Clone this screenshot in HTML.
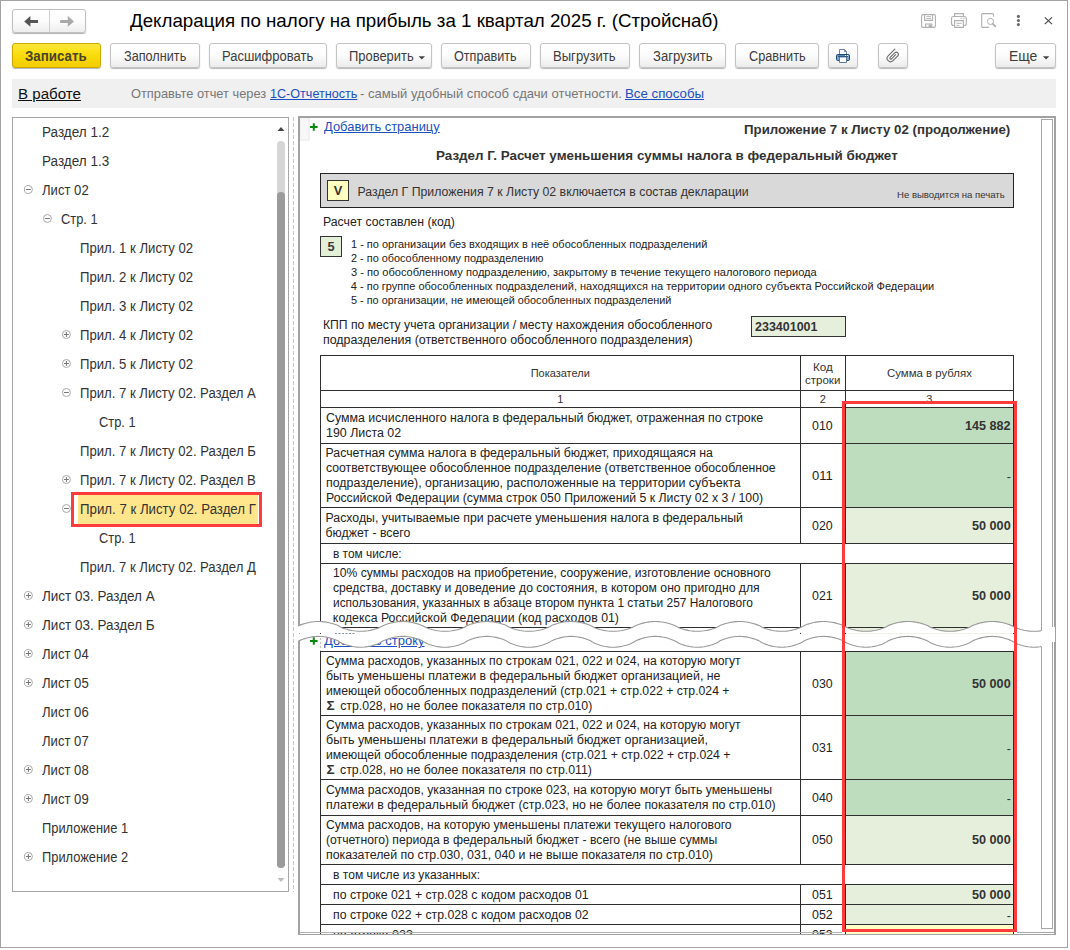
<!DOCTYPE html>
<html lang="ru"><head><meta charset="utf-8"><title>Декларация по налогу на прибыль</title>
<style>
html,body{margin:0;padding:0;background:#fff;}
body{width:1070px;height:950px;position:relative;overflow:hidden;font-family:"Liberation Sans", sans-serif;}
.abs{position:absolute;}
.t{position:absolute;white-space:nowrap;line-height:16px;transform-origin:0 50%;}
.btn{position:absolute;top:43px;height:25px;border:1px solid #c3c3c3;border-radius:3px;background:linear-gradient(#ffffff 0%,#fdfdfd 45%,#ececec 100%);box-shadow:0 1px 1px rgba(0,0,0,.28);box-sizing:border-box;}
.btn.y{border-color:#c9a800;background:linear-gradient(#ffe838 0%,#fadb0a 50%,#f2cc00 100%);}
</style></head><body>
<div class="abs" style="left:0;top:0;width:1066px;height:946px;border:1px solid #a3a3a3"></div>

<!-- nav buttons -->
<div class="abs" style="left:12px;top:9px;width:74px;height:24px;border:1px solid #c0c0c0;border-radius:3px;box-sizing:border-box;background:linear-gradient(#fff 0%,#fcfcfc 50%,#eee 100%);box-shadow:0 1px 1px rgba(0,0,0,.3)"></div>
<div class="abs" style="left:49px;top:10px;width:1px;height:22px;background:#cfcfcf"></div>
<svg class="abs" style="left:12px;top:9px" width="74" height="24" viewBox="12 9 74 24">
<path d="M24.2 21.4 L30.4 16 V19.9 H38 V22.9 H30.4 V26.8 Z" fill="#555"/>
<path d="M74 21.4 L67.8 16 V19.9 H60.2 V22.9 H67.8 V26.8 Z" fill="#a9a9a9"/>
</svg>

<!-- window icons -->
<svg class="abs" style="left:915px;top:8px" width="145" height="26" viewBox="915 8 145 26">
<g fill="none" stroke="#b0b0b0" stroke-width="1.1">
<rect x="921.6" y="14.6" width="13.800" height="12.800" rx="1.300"/>
<path d="M924.6 14.600 V20.400 H932.6 V14.600"/>
<path d="M926.300 16.600H931 M926.300 18.500H931" stroke-width="0.900"/>
<path d="M925.600 27.400 V24 H931.800 V27.400"/>
<rect x="928.600" y="24.500" width="3" height="3" fill="#b0b0b0" stroke="none"/>
<path d="M954.600 16.500 V13.600 H963.400 V16.500"/>
<rect x="951.500" y="16.500" width="14.800" height="9" rx="2"/>
<path d="M954.600 20.600 H963.400 V27.400 H954.600 Z" fill="#fff"/>
<path d="M956.500 23.300H961.800 M956.500 25.400H959.300" stroke-width="0.900"/>
<path d="M960.500 18.300H962.200 M963.200 18.300H964.800" stroke-width="0.900"/>
<path d="M993.500 16.800 V14.600 Q993.500 13.600 992.500 13.600 H982.700 Q981.700 13.600 981.700 14.600 V26.400 Q981.700 27.400 982.700 27.400 H989"/>
<circle cx="990.500" cy="21.400" r="3.100" stroke-width="1"/>
<path d="M992.800 23.800 L995.400 26.400" stroke-width="1.700" stroke-linecap="round"/>
</g>
<circle cx="1018.4" cy="16.4" r="1.55" fill="#6a6a6a"/><circle cx="1018.4" cy="20.5" r="1.55" fill="#6a6a6a"/><circle cx="1018.4" cy="24.6" r="1.55" fill="#6a6a6a"/>
<path d="M1044.8 17.300 L1052 24.200 M1052 17.300 L1044.8 24.200" stroke="#444" stroke-width="1.1" fill="none"/>
</svg>

<!-- toolbar buttons -->
<div class="btn y" style="left:12px;width:89px"></div>
<div class="btn" style="left:110px;width:90px"></div>
<div class="btn" style="left:209px;width:118px"></div>
<div class="btn" style="left:336px;width:96px"></div>
<div class="btn" style="left:441px;width:90px"></div>
<div class="btn" style="left:540px;width:90px"></div>
<div class="btn" style="left:639px;width:87px"></div>
<div class="btn" style="left:735px;width:84px"></div>
<div class="btn" style="left:828px;width:30px"></div>
<div class="btn" style="left:878px;width:30px"></div>
<div class="btn" style="left:995px;width:61px"></div>
<svg class="abs" style="left:410px;top:50px" width="20" height="12" viewBox="410 50 20 12"><path d="M418.600 56.300 H425 L421.800 59.600 Z" fill="#444"/></svg>
<svg class="abs" style="left:1038px;top:50px" width="16" height="12" viewBox="1038 50 16 12"><path d="M1042.900 56.300 H1049.300 L1046.100 59.600 Z" fill="#444"/></svg>
<!-- printer icon -->
<svg class="abs" style="left:834px;top:47px" width="18" height="18" viewBox="834 47 18 18">
<path d="M839.500 54.500 V49.500 H844.500 L846.500 51.500 V54.500 Z" fill="#fff" stroke="#70839b" stroke-width="1"/>
<path d="M844.500 49.500 V51.500 H846.500" fill="none" stroke="#70839b" stroke-width="1"/>
<rect x="836.500" y="54.500" width="13" height="6" rx="1.200" fill="#7ea6d6" stroke="#1f4a78" stroke-width="1"/>
<rect x="837.500" y="55" width="11" height="1" fill="#5b86b8"/>
<rect x="838" y="56" width="10" height="1" fill="#35557c"/>
<rect x="845" y="55" width="1" height="1" fill="#fff"/><rect x="847" y="55" width="1" height="1" fill="#fff"/>
<rect x="840" y="57" width="6" height="5.500" fill="#fff"/>
<rect x="840" y="57" width="6" height="1" fill="#a9c4e4"/>
<path d="M839.500 57 V62.500 H846.500 V57" fill="none" stroke="#5f7793" stroke-width="1"/>
</svg>
<!-- paperclip -->
<svg class="abs" style="left:884px;top:47px" width="18" height="18" viewBox="884 47 18 18">
<path d="M6.2 -3.4 L-3.300 -3.4 A3.4 3.4 0 0 0 -3.300 3.4 L3.500 3.4 A2.150 2.150 0 0 0 3.500 -0.900 L-3 -0.900 A1 1 0 0 0 -3 1.100 L2.800 1.100" fill="none" stroke="#6c6c6c" stroke-width="1.100" stroke-linecap="round" transform="translate(892.9 55.9) rotate(-45)"/>
</svg>

<!-- info bar -->
<div class="abs" style="left:12px;top:79px;width:1044px;height:29px;background:#f0f0f0"></div>

<!-- tree panel -->
<div class="abs" style="left:12px;top:117px;width:277px;height:775px;border:1px solid #a6a6a6;box-sizing:border-box;background:#fff"></div>
<div class="abs" style="left:71px;top:492px;width:191px;height:35px;border:3px solid #ff3b3b;box-sizing:border-box;background:#fff"></div>
<div class="abs" style="left:78px;top:495px;width:180px;height:29px;background:#ffe68c"></div>
<svg class="abs" style="left:12px;top:117px" width="277" height="775" viewBox="12 117 277 775">
<circle cx="28.4" cy="189.5" r="4" fill="#fff" stroke="#a8a8a8" stroke-width="1"/><path d="M25.9 189.5H30.9" stroke="#777" stroke-width="1"/><circle cx="47.4" cy="218.5" r="4" fill="#fff" stroke="#a8a8a8" stroke-width="1"/><path d="M44.9 218.5H49.9" stroke="#777" stroke-width="1"/><circle cx="66.4" cy="334.5" r="4" fill="#fff" stroke="#a8a8a8" stroke-width="1"/><path d="M63.900000000000006 334.5H68.9" stroke="#777" stroke-width="1"/><path d="M66.4 332.0V337.0" stroke="#777" stroke-width="1"/><circle cx="66.4" cy="363.5" r="4" fill="#fff" stroke="#a8a8a8" stroke-width="1"/><path d="M63.900000000000006 363.5H68.9" stroke="#777" stroke-width="1"/><path d="M66.4 361.0V366.0" stroke="#777" stroke-width="1"/><circle cx="66.4" cy="392.5" r="4" fill="#fff" stroke="#a8a8a8" stroke-width="1"/><path d="M63.900000000000006 392.5H68.9" stroke="#777" stroke-width="1"/><circle cx="66.4" cy="479.5" r="4" fill="#fff" stroke="#a8a8a8" stroke-width="1"/><path d="M63.900000000000006 479.5H68.9" stroke="#777" stroke-width="1"/><path d="M66.4 477.0V482.0" stroke="#777" stroke-width="1"/><circle cx="66.4" cy="508.5" r="4" fill="#fff" stroke="#a8a8a8" stroke-width="1"/><path d="M63.900000000000006 508.5H68.9" stroke="#777" stroke-width="1"/><circle cx="28.4" cy="595.5" r="4" fill="#fff" stroke="#a8a8a8" stroke-width="1"/><path d="M25.9 595.5H30.9" stroke="#777" stroke-width="1"/><path d="M28.4 593.0V598.0" stroke="#777" stroke-width="1"/><circle cx="28.4" cy="624.5" r="4" fill="#fff" stroke="#a8a8a8" stroke-width="1"/><path d="M25.9 624.5H30.9" stroke="#777" stroke-width="1"/><path d="M28.4 622.0V627.0" stroke="#777" stroke-width="1"/><circle cx="28.4" cy="653.5" r="4" fill="#fff" stroke="#a8a8a8" stroke-width="1"/><path d="M25.9 653.5H30.9" stroke="#777" stroke-width="1"/><path d="M28.4 651.0V656.0" stroke="#777" stroke-width="1"/><circle cx="28.4" cy="682.5" r="4" fill="#fff" stroke="#a8a8a8" stroke-width="1"/><path d="M25.9 682.5H30.9" stroke="#777" stroke-width="1"/><path d="M28.4 680.0V685.0" stroke="#777" stroke-width="1"/><circle cx="28.4" cy="769.5" r="4" fill="#fff" stroke="#a8a8a8" stroke-width="1"/><path d="M25.9 769.5H30.9" stroke="#777" stroke-width="1"/><path d="M28.4 767.0V772.0" stroke="#777" stroke-width="1"/><circle cx="28.4" cy="798.5" r="4" fill="#fff" stroke="#a8a8a8" stroke-width="1"/><path d="M25.9 798.5H30.9" stroke="#777" stroke-width="1"/><path d="M28.4 796.0V801.0" stroke="#777" stroke-width="1"/><circle cx="28.4" cy="856.5" r="4" fill="#fff" stroke="#a8a8a8" stroke-width="1"/><path d="M25.9 856.5H30.9" stroke="#777" stroke-width="1"/><path d="M28.4 854.0V859.0" stroke="#777" stroke-width="1"/>
<path d="M277.500 131 L281 127 L284.500 131 Z" fill="#444"/>
<rect x="277" y="141" width="8" height="727" rx="4" fill="#d6d6d6"/>
<rect x="277" y="192" width="8" height="676" rx="4" fill="#9b9b9b"/>
<path d="M277.500 878 L281 882 L284.500 878 Z" fill="#bdbdbd"/>
</svg>
<!-- splitter -->
<div class="abs" style="left:293px;top:117px;width:1px;height:775px;background:repeating-linear-gradient(#c9c9c9 0,#c9c9c9 4px,#fff 4px,#fff 6px)"></div>

<!-- report panel -->
<div class="abs" style="left:298px;top:116px;width:758px;height:819px;border:2px solid #a2a2a2;border-bottom-width:1px;box-sizing:border-box;background:#fff"></div>
<div class="abs" style="left:300px;top:118px;width:10px;height:23px;background:#f1f1f1"></div>
<div class="abs" style="left:301px;top:119px;width:7px;height:20px;background:#f8f8f8"></div>
<div class="abs" style="left:1041px;top:119px;width:12px;height:810px;border:1px solid #a6a6a6;box-sizing:border-box;background:#fff"></div>
<div class="abs" style="left:1017px;top:932px;width:37px;height:1px;background:#a6a6a6"></div>
<div class="abs" id="bl932" style="left:300px;top:932px;width:542px;height:1px;background:#b2b2b2;z-index:5"></div>
<svg class="abs" style="left:309px;top:122px" width="10" height="10" viewBox="0 0 10 10"><path d="M1 5H8.600M4.800 1.200V8.800" stroke="#0a8a0a" stroke-width="2" fill="none"/></svg>
<svg class="abs" style="left:309px;top:636px" width="10" height="10" viewBox="0 0 10 10"><path d="M1 5H8.600M4.800 1.200V8.800" stroke="#0a8a0a" stroke-width="2" fill="none"/></svg>

<!-- gray banner -->
<div class="abs" style="left:320px;top:173px;width:694px;height:35px;border:1px solid #222;box-sizing:border-box;background:#d9d9d9"></div>
<div class="abs" style="left:327px;top:180px;width:22px;height:21px;border:1px solid #333;box-sizing:border-box;background:#ffffc0"></div>
<div class="abs" style="left:320px;top:236px;width:22px;height:21px;border:1px solid #333;box-sizing:border-box;background:#e4efd8"></div>
<div class="abs" style="left:751px;top:316px;width:95px;height:21px;border:1px solid #333;box-sizing:border-box;background:#e6efdc"></div>

<div class="abs" style="left:320px;top:634px;width:1px;height:17px;background:repeating-linear-gradient(#c4c4c4 0,#c4c4c4 2px,#fff 2px,#fff 4px)"></div>
<div class="abs" style="left:846px;top:408px;width:167px;height:35px;background:#bedcbe"></div>
<div class="abs" style="left:846px;top:444px;width:167px;height:63px;background:#bedcbe"></div>
<div class="abs" style="left:846px;top:508px;width:167px;height:35px;background:#e6efdc"></div>
<div class="abs" style="left:846px;top:564px;width:167px;height:69px;background:#e6efdc"></div>
<div class="abs" style="left:846px;top:652px;width:167px;height:63px;background:#bedcbe"></div>
<div class="abs" style="left:846px;top:716px;width:167px;height:63px;background:#bedcbe"></div>
<div class="abs" style="left:846px;top:780px;width:167px;height:35px;background:#bedcbe"></div>
<div class="abs" style="left:846px;top:816px;width:167px;height:48px;background:#e6efdc"></div>
<div class="abs" style="left:846px;top:885px;width:167px;height:19px;background:#e6efdc"></div>
<div class="abs" style="left:846px;top:905px;width:167px;height:19px;background:#e6efdc"></div>
<div class="abs" style="left:846px;top:925px;width:167px;height:9px;background:#ffffc8"></div>
<div class="abs" style="left:320px;top:355px;width:694px;height:1px;background:#2e2e2e"></div>
<div class="abs" style="left:320px;top:390px;width:694px;height:1px;background:#2e2e2e"></div>
<div class="abs" style="left:320px;top:407px;width:694px;height:1px;background:#2e2e2e"></div>
<div class="abs" style="left:320px;top:443px;width:694px;height:1px;background:#2e2e2e"></div>
<div class="abs" style="left:320px;top:507px;width:694px;height:1px;background:#2e2e2e"></div>
<div class="abs" style="left:320px;top:543px;width:694px;height:1px;background:#2e2e2e"></div>
<div class="abs" style="left:320px;top:563px;width:694px;height:1px;background:#2e2e2e"></div>
<div class="abs" style="left:320px;top:627px;width:694px;height:1px;background:#2e2e2e"></div>
<div class="abs" style="left:320px;top:355px;width:1px;height:278px;background:#2e2e2e"></div>
<div class="abs" style="left:1013px;top:355px;width:1px;height:278px;background:#2e2e2e"></div>
<div class="abs" style="left:845px;top:355px;width:1px;height:189px;background:#2e2e2e"></div>
<div class="abs" style="left:845px;top:563px;width:1px;height:70px;background:#2e2e2e"></div>
<div class="abs" style="left:800px;top:355px;width:1px;height:189px;background:#2e2e2e"></div>
<div class="abs" style="left:800px;top:563px;width:1px;height:70px;background:#2e2e2e"></div>
<div class="abs" style="left:320px;top:651px;width:694px;height:1px;background:#2e2e2e"></div>
<div class="abs" style="left:320px;top:715px;width:694px;height:1px;background:#2e2e2e"></div>
<div class="abs" style="left:320px;top:779px;width:694px;height:1px;background:#2e2e2e"></div>
<div class="abs" style="left:320px;top:815px;width:694px;height:1px;background:#2e2e2e"></div>
<div class="abs" style="left:320px;top:864px;width:694px;height:1px;background:#2e2e2e"></div>
<div class="abs" style="left:320px;top:884px;width:694px;height:1px;background:#2e2e2e"></div>
<div class="abs" style="left:320px;top:904px;width:694px;height:1px;background:#2e2e2e"></div>
<div class="abs" style="left:320px;top:924px;width:694px;height:1px;background:#2e2e2e"></div>
<div class="abs" style="left:320px;top:651px;width:1px;height:283px;background:#2e2e2e"></div>
<div class="abs" style="left:1013px;top:651px;width:1px;height:283px;background:#2e2e2e"></div>
<div class="abs" style="left:845px;top:651px;width:1px;height:214px;background:#2e2e2e"></div>
<div class="abs" style="left:845px;top:884px;width:1px;height:50px;background:#2e2e2e"></div>
<div class="abs" style="left:800px;top:651px;width:1px;height:214px;background:#2e2e2e"></div>
<div class="abs" style="left:800px;top:884px;width:1px;height:50px;background:#2e2e2e"></div>

<div class="abs" id="texts" style="left:0;top:0;width:1070px;height:934px;overflow:hidden">
<span class="t" style="left:130.18px;top:13.00px;font-size:18.67px;color:#000;transform:scaleX(1.0041);">Декларация по налогу на прибыль за 1 квартал 2025 г. (Стройснаб)</span>
<span class="t" style="left:25.26px;top:48.00px;font-size:14px;color:#4a4326;font-weight:700;transform:scaleX(0.9514);">Записать</span>
<span class="t" style="left:123.56px;top:48.00px;font-size:14px;color:#3d3d3d;transform:scaleX(0.9061);">Заполнить</span>
<span class="t" style="left:222.36px;top:48.00px;font-size:14px;color:#3d3d3d;transform:scaleX(0.9277);">Расшифровать</span>
<span class="t" style="left:349.16px;top:48.00px;font-size:14px;color:#3d3d3d;transform:scaleX(0.9238);">Проверить</span>
<span class="t" style="left:454.26px;top:48.00px;font-size:14px;color:#3d3d3d;transform:scaleX(0.9029);">Отправить</span>
<span class="t" style="left:553.36px;top:48.00px;font-size:14px;color:#3d3d3d;transform:scaleX(0.9342);">Выгрузить</span>
<span class="t" style="left:652.66px;top:48.00px;font-size:14px;color:#3d3d3d;transform:scaleX(0.9334);">Загрузить</span>
<span class="t" style="left:748.66px;top:48.00px;font-size:14px;color:#3d3d3d;transform:scaleX(0.9085);">Сравнить</span>
<span class="t" style="left:1008.76px;top:48.00px;font-size:14px;color:#3d3d3d;transform:scaleX(0.9958);">Еще</span>
<span class="t" style="left:17.62px;top:86.00px;font-size:14.67px;color:#111;transform:scaleX(1.0308);text-decoration:underline;">В работе</span>
<span class="t" style="left:131.42px;top:86.00px;font-size:13px;color:#777;transform:scaleX(0.9861);">Отправьте отчет через</span>
<span class="t" style="left:270.02px;top:86.00px;font-size:13px;color:#1c4fc0;transform:scaleX(0.9686);text-decoration:underline;">1С-Отчетность</span>
<span class="t" style="left:360.22px;top:86.00px;font-size:13px;color:#777;transform:scaleX(1.0029);">- самый удобный способ сдачи отчетности.</span>
<span class="t" style="left:625.42px;top:86.00px;font-size:13px;color:#1c4fc0;transform:scaleX(1.0207);text-decoration:underline;">Все способы</span>
<span class="t" style="left:41.66px;top:124.00px;font-size:14.0px;color:#333;transform:scaleX(0.9649);">Раздел 1.2</span>
<span class="t" style="left:41.66px;top:153.00px;font-size:14.0px;color:#333;transform:scaleX(0.9649);">Раздел 1.3</span>
<span class="t" style="left:42.06px;top:182.00px;font-size:14.0px;color:#333;transform:scaleX(0.9356);">Лист 02</span>
<span class="t" style="left:60.66px;top:211.00px;font-size:14.0px;color:#333;transform:scaleX(0.9174);">Стр. 1</span>
<span class="t" style="left:79.66px;top:240.00px;font-size:14.0px;color:#333;transform:scaleX(0.9395);">Прил. 1 к Листу 02</span>
<span class="t" style="left:79.66px;top:269.00px;font-size:14.0px;color:#333;transform:scaleX(0.9395);">Прил. 2 к Листу 02</span>
<span class="t" style="left:79.66px;top:298.00px;font-size:14.0px;color:#333;transform:scaleX(0.9395);">Прил. 3 к Листу 02</span>
<span class="t" style="left:79.66px;top:327.00px;font-size:14.0px;color:#333;transform:scaleX(0.9395);">Прил. 4 к Листу 02</span>
<span class="t" style="left:79.66px;top:356.00px;font-size:14.0px;color:#333;transform:scaleX(0.9395);">Прил. 5 к Листу 02</span>
<span class="t" style="left:79.66px;top:385.00px;font-size:14.0px;color:#333;transform:scaleX(0.9373);">Прил. 7 к Листу 02. Раздел А</span>
<span class="t" style="left:98.66px;top:414.00px;font-size:14.0px;color:#333;transform:scaleX(0.9174);">Стр. 1</span>
<span class="t" style="left:79.66px;top:443.00px;font-size:14.0px;color:#333;transform:scaleX(0.9381);">Прил. 7 к Листу 02. Раздел Б</span>
<span class="t" style="left:79.66px;top:472.00px;font-size:14.0px;color:#333;transform:scaleX(0.9373);">Прил. 7 к Листу 02. Раздел В</span>
<span class="t" style="left:79.66px;top:501.00px;font-size:14.0px;color:#333;transform:scaleX(0.9462);">Прил. 7 к Листу 02. Раздел Г</span>
<span class="t" style="left:98.66px;top:530.00px;font-size:14.0px;color:#333;transform:scaleX(0.9174);">Стр. 1</span>
<span class="t" style="left:79.66px;top:559.00px;font-size:14.0px;color:#333;transform:scaleX(0.9366);">Прил. 7 к Листу 02. Раздел Д</span>
<span class="t" style="left:42.06px;top:588.00px;font-size:14.0px;color:#333;transform:scaleX(0.9617);">Лист 03. Раздел А</span>
<span class="t" style="left:42.06px;top:617.00px;font-size:14.0px;color:#333;transform:scaleX(0.9629);">Лист 03. Раздел Б</span>
<span class="t" style="left:42.06px;top:646.00px;font-size:14.0px;color:#333;transform:scaleX(0.9356);">Лист 04</span>
<span class="t" style="left:42.06px;top:675.00px;font-size:14.0px;color:#333;transform:scaleX(0.9356);">Лист 05</span>
<span class="t" style="left:42.06px;top:704.00px;font-size:14.0px;color:#333;transform:scaleX(0.9356);">Лист 06</span>
<span class="t" style="left:42.06px;top:733.00px;font-size:14.0px;color:#333;transform:scaleX(0.9356);">Лист 07</span>
<span class="t" style="left:42.06px;top:762.00px;font-size:14.0px;color:#333;transform:scaleX(0.9356);">Лист 08</span>
<span class="t" style="left:42.06px;top:791.00px;font-size:14.0px;color:#333;transform:scaleX(0.9356);">Лист 09</span>
<span class="t" style="left:41.66px;top:820.00px;font-size:14.0px;color:#333;transform:scaleX(0.9177);">Приложение 1</span>
<span class="t" style="left:41.66px;top:849.00px;font-size:14.0px;color:#333;transform:scaleX(0.9177);">Приложение 2</span>
<span class="t" style="left:323.73px;top:119.00px;font-size:12.8px;color:#1c4fc0;transform:scaleX(1.0102);text-decoration:underline;">Добавить страницу</span>
<span class="t" style="left:743.90px;top:122.00px;font-size:13.33px;color:#333;font-weight:700;transform:scaleX(0.9960);">Приложение 7 к Листу 02 (продолжение)</span>
<span class="t" style="left:435.70px;top:148.00px;font-size:13.33px;color:#333;font-weight:700;transform:scaleX(1.0063);">Раздел Г. Расчет уменьшения суммы налога в федеральный бюджет</span>
<span class="t" style="left:333.83px;top:183.00px;font-size:12.8px;color:#333;font-weight:700;">V</span>
<span class="t" style="left:357.56px;top:184.00px;font-size:12.3px;color:#333;">Раздел Г Приложения 7 к Листу 02 включается в состав декларации</span>
<span class="t" style="left:896.62px;top:187.00px;font-size:9.6px;color:#333;transform:scaleX(0.9971);">Не выводится на печать</span>
<span class="t" style="left:322.76px;top:214.00px;font-size:12.3px;color:#222;transform:scaleX(0.9978);">Расчет составлен (код)</span>
<span class="t" style="left:327.44px;top:239.00px;font-size:12.8px;color:#3a3a3a;font-weight:700;">5</span>
<span class="t" style="left:350.84px;top:236.00px;font-size:11px;color:#222;transform:scaleX(0.9973);">1 - по организации без входящих в неё обособленных подразделений</span>
<span class="t" style="left:350.84px;top:250.00px;font-size:11px;color:#222;transform:scaleX(0.9898);">2 - по обособленному подразделению</span>
<span class="t" style="left:350.84px;top:264.00px;font-size:11px;color:#222;transform:scaleX(1.0071);">3 - по обособленному подразделению, закрытому в течение текущего налогового периода</span>
<span class="t" style="left:350.84px;top:278.00px;font-size:11px;color:#222;">4 - по группе обособленных подразделений, находящихся на территории одного субъекта Российской Федерации</span>
<span class="t" style="left:350.84px;top:292.00px;font-size:11px;color:#222;transform:scaleX(0.9881);">5 - по организации, не имеющей обособленных подразделений</span>
<span class="t" style="left:322.76px;top:317.00px;font-size:12.3px;color:#222;transform:scaleX(0.9893);">КПП по месту учета организации / месту нахождения обособленного</span>
<span class="t" style="left:322.76px;top:332.00px;font-size:12.3px;color:#222;transform:scaleX(1.0106);">подразделения (ответственного обособленного подразделения)</span>
<span class="t" style="left:755.46px;top:319.00px;font-size:12.3px;color:#333;font-weight:700;transform:scaleX(1.0148);">233401001</span>
<span class="t" style="left:530.64px;top:365.00px;font-size:11px;color:#333;">Показатели</span>
<span class="t" style="left:812.79px;top:359.00px;font-size:11px;color:#333;transform:scaleX(1.0597);">Код</span>
<span class="t" style="left:805.04px;top:372.00px;font-size:11px;color:#333;transform:scaleX(1.0470);">строки</span>
<span class="t" style="left:886.84px;top:365.00px;font-size:11px;color:#333;transform:scaleX(1.0378);">Сумма в рублях</span>
<span class="t" style="left:557.24px;top:391.00px;font-size:11px;color:#333;">1</span>
<span class="t" style="left:819.64px;top:391.00px;font-size:11px;color:#333;">2</span>
<span class="t" style="left:926.24px;top:391.00px;font-size:11px;color:#333;">3</span>
<span class="t" style="left:325.56px;top:410.00px;font-size:12.3px;color:#222;transform:scaleX(1.0061);">Сумма исчисленного налога в федеральный бюджет, отраженная по строке</span>
<span class="t" style="left:325.56px;top:425.00px;font-size:12.3px;color:#222;transform:scaleX(1.0084);">190 Листа 02</span>
<span class="t" style="left:325.56px;top:445.00px;font-size:12.3px;color:#222;">Расчетная сумма налога в федеральный бюджет, приходящаяся на</span>
<span class="t" style="left:325.56px;top:460.00px;font-size:12.3px;color:#222;transform:scaleX(0.9950);">соответствующее обособленное подразделение (ответственное обособленное</span>
<span class="t" style="left:325.56px;top:475.00px;font-size:12.3px;color:#222;transform:scaleX(1.0072);">подразделение), организацию, расположенные на территории субъекта</span>
<span class="t" style="left:325.56px;top:490.00px;font-size:12.3px;color:#222;transform:scaleX(0.9975);">Российской Федерации (сумма строк 050 Приложений 5 к Листу 02 х 3 / 100)</span>
<span class="t" style="left:325.56px;top:510.00px;font-size:12.3px;color:#222;">Расходы, учитываемые при расчете уменьшения налога в федеральный</span>
<span class="t" style="left:325.56px;top:525.00px;font-size:12.3px;color:#222;">бюджет - всего</span>
<span class="t" style="left:332.86px;top:546.00px;font-size:12.3px;color:#222;transform:scaleX(0.9671);">в том числе:</span>
<span class="t" style="left:332.86px;top:565.00px;font-size:12.3px;color:#222;transform:scaleX(0.9886);">10% суммы расходов на приобретение, сооружение, изготовление основного</span>
<span class="t" style="left:332.86px;top:580.00px;font-size:12.3px;color:#222;transform:scaleX(0.9901);">средства, доставку и доведение до состояния, в котором оно пригодно для</span>
<span class="t" style="left:332.86px;top:595.00px;font-size:12.3px;color:#222;transform:scaleX(0.9682);">использования, указанных в абзаце втором пункта 1 статьи 257 Налогового</span>
<span class="t" style="left:332.86px;top:610.00px;font-size:12.3px;color:#222;">кодекса Российской Федерации (код расходов 01)</span>
<span class="t" style="left:325.56px;top:653.00px;font-size:12.3px;color:#222;transform:scaleX(0.9898);">Сумма расходов, указанных по строкам 021, 022 и 024, на которую могут</span>
<span class="t" style="left:325.56px;top:668.00px;font-size:12.3px;color:#222;transform:scaleX(1.0054);">быть уменьшены платежи в федеральный бюджет организацией, не</span>
<span class="t" style="left:325.56px;top:683.00px;font-size:12.3px;color:#222;transform:scaleX(0.9936);">имеющей обособленных подразделений (стр.021 + стр.022 + стр.024 +</span>
<span class="t" style="left:340.16px;top:698.00px;font-size:12.3px;color:#222;">стр.028, но не более показателя по стр.010)</span>
<span class="t" style="left:325.56px;top:717.00px;font-size:12.3px;color:#222;transform:scaleX(0.9898);">Сумма расходов, указанных по строкам 021, 022 и 024, на которую могут</span>
<span class="t" style="left:325.56px;top:732.00px;font-size:12.3px;color:#222;transform:scaleX(1.0175);">быть уменьшены платежи в федеральный бюджет организацией,</span>
<span class="t" style="left:325.56px;top:747.00px;font-size:12.3px;color:#222;transform:scaleX(0.9946);">имеющей обособленные подразделения (стр.021 + стр.022 + стр.024 +</span>
<span class="t" style="left:340.16px;top:762.00px;font-size:12.3px;color:#222;transform:scaleX(1.0029);">стр.028, но не более показателя по стр.011)</span>
<span class="t" style="left:325.56px;top:782.00px;font-size:12.3px;color:#222;transform:scaleX(0.9937);">Сумма расходов, указанная по строке 023, на которую могут быть уменьшены</span>
<span class="t" style="left:325.56px;top:797.00px;font-size:12.3px;color:#222;transform:scaleX(1.0036);">платежи в федеральный бюджет (стр.023, но не более показателя по стр.010)</span>
<span class="t" style="left:325.56px;top:817.00px;font-size:12.3px;color:#222;transform:scaleX(0.9929);">Сумма расходов, на которую уменьшены платежи текущего налогового</span>
<span class="t" style="left:325.56px;top:832.00px;font-size:12.3px;color:#222;transform:scaleX(0.9909);">(отчетного) периода в федеральный бюджет - всего (не выше суммы</span>
<span class="t" style="left:325.56px;top:847.00px;font-size:12.3px;color:#222;transform:scaleX(1.0036);">показателей по стр.030, 031, 040 и не выше показателя по стр.010)</span>
<span class="t" style="left:332.86px;top:867.00px;font-size:12.3px;color:#222;transform:scaleX(0.9818);">в том числе из указанных:</span>
<span class="t" style="left:332.86px;top:887.00px;font-size:12.3px;color:#222;transform:scaleX(0.9978);">по строке 021 + стр.028 с кодом расходов 01</span>
<span class="t" style="left:332.86px;top:907.00px;font-size:12.3px;color:#222;transform:scaleX(0.9978);">по строке 022 + стр.028 с кодом расходов 02</span>
<span class="t clip" style="left:332.86px;top:927.00px;font-size:12.3px;color:#222;transform:scaleX(1.0153);">по строке 023</span>
<span class="t" style="left:326.49px;top:698.00px;font-size:13.5px;color:#333;font-weight:700;">Σ</span>
<span class="t" style="left:326.49px;top:762.00px;font-size:13.5px;color:#333;font-weight:700;">Σ</span>
<span class="t" style="left:812.36px;top:418.00px;font-size:12.3px;color:#222;transform:scaleX(1.0071);">010</span>
<span class="t" style="left:812.36px;top:468.00px;font-size:12.3px;color:#222;transform:scaleX(1.0544);">011</span>
<span class="t" style="left:812.36px;top:518.00px;font-size:12.3px;color:#222;transform:scaleX(1.0071);">020</span>
<span class="t" style="left:812.36px;top:588.00px;font-size:12.3px;color:#222;transform:scaleX(1.0071);">021</span>
<span class="t" style="left:812.36px;top:676.00px;font-size:12.3px;color:#222;transform:scaleX(1.0071);">030</span>
<span class="t" style="left:812.36px;top:740.00px;font-size:12.3px;color:#222;transform:scaleX(1.0071);">031</span>
<span class="t" style="left:812.36px;top:790.00px;font-size:12.3px;color:#222;transform:scaleX(1.0071);">040</span>
<span class="t" style="left:812.36px;top:832.00px;font-size:12.3px;color:#222;transform:scaleX(1.0071);">050</span>
<span class="t" style="left:812.36px;top:887.00px;font-size:12.3px;color:#222;transform:scaleX(1.0071);">051</span>
<span class="t" style="left:812.36px;top:907.00px;font-size:12.3px;color:#222;transform:scaleX(1.0071);">052</span>
<span class="t clip" style="left:812.36px;top:927.00px;font-size:12.3px;color:#222;transform:scaleX(1.0071);">053</span>
<span class="t" style="left:964.96px;top:418.00px;font-size:12.3px;color:#333;font-weight:700;transform:scaleX(1.0230);">145 882</span>
<span class="t" style="left:1006.83px;top:469.00px;font-size:12.3px;color:#333;">-</span>
<span class="t" style="left:971.76px;top:518.00px;font-size:12.3px;color:#333;font-weight:700;transform:scaleX(1.0279);">50 000</span>
<span class="t" style="left:971.76px;top:588.00px;font-size:12.3px;color:#333;font-weight:700;transform:scaleX(1.0279);">50 000</span>
<span class="t" style="left:971.76px;top:676.00px;font-size:12.3px;color:#333;font-weight:700;transform:scaleX(1.0279);">50 000</span>
<span class="t" style="left:1006.83px;top:741.00px;font-size:12.3px;color:#333;">-</span>
<span class="t" style="left:1006.83px;top:791.00px;font-size:12.3px;color:#333;">-</span>
<span class="t" style="left:971.76px;top:832.00px;font-size:12.3px;color:#333;font-weight:700;transform:scaleX(1.0279);">50 000</span>
<span class="t" style="left:971.76px;top:887.00px;font-size:12.3px;color:#333;font-weight:700;transform:scaleX(1.0279);">50 000</span>
<span class="t" style="left:1006.83px;top:908.00px;font-size:12.3px;color:#333;">-</span>
<span class="t" style="left:323.73px;top:633.00px;font-size:12.8px;color:#1c4fc0;transform:scaleX(1.0181);text-decoration:underline;">Добавить строку</span>
</div>

<svg class="abs" style="left:0;top:600px" width="1070" height="70" viewBox="0 600 1070 70">
<polygon points="296.0,626.02 298.0,626.02 300.0,625.11 302.0,624.37 304.0,623.72 306.0,623.16 308.0,622.68 310.0,622.28 312.0,621.96 314.0,621.72 316.0,621.57 318.0,621.50 320.0,621.52 322.0,621.63 324.0,621.83 326.0,622.11 328.0,622.47 330.0,622.91 332.0,623.43 334.0,624.03 336.0,624.72 338.0,625.53 340.0,626.72 342.0,627.65 344.0,628.40 346.0,629.05 348.0,629.61 350.0,630.10 352.0,630.50 354.0,630.83 356.0,631.07 358.0,631.23 360.0,631.30 362.0,631.28 364.0,631.17 366.0,630.98 368.0,630.71 370.0,630.35 372.0,629.91 374.0,629.39 376.0,628.80 378.0,628.11 380.0,627.32 382.0,626.13 384.0,625.19 386.0,624.44 388.0,623.78 390.0,623.22 392.0,622.73 394.0,622.32 396.0,621.99 398.0,621.74 400.0,621.58 402.0,621.51 404.0,621.52 406.0,621.62 408.0,621.81 410.0,622.08 412.0,622.43 414.0,622.86 416.0,623.38 418.0,623.97 420.0,624.65 422.0,625.44 424.0,626.60 426.0,627.57 428.0,628.33 430.0,628.99 432.0,629.56 434.0,630.05 436.0,630.47 438.0,630.80 440.0,631.05 442.0,631.21 444.0,631.29 446.0,631.28 448.0,631.19 450.0,631.01 452.0,630.74 454.0,630.39 456.0,629.96 458.0,629.45 460.0,628.86 462.0,628.19 464.0,627.40 466.0,626.27 468.0,625.27 470.0,624.51 472.0,623.85 474.0,623.27 476.0,622.77 478.0,622.35 480.0,622.02 482.0,621.76 484.0,621.59 486.0,621.51 488.0,621.51 490.0,621.60 492.0,621.78 494.0,622.05 496.0,622.39 498.0,622.82 500.0,623.32 502.0,623.91 504.0,624.58 506.0,625.35 508.0,626.46 510.0,627.49 512.0,628.26 514.0,628.92 516.0,629.50 518.0,630.01 520.0,630.43 522.0,630.77 524.0,631.03 526.0,631.20 528.0,631.29 530.0,631.29 532.0,631.20 534.0,631.03 536.0,630.77 538.0,630.43 540.0,630.01 542.0,629.50 544.0,628.92 546.0,628.26 548.0,627.49 550.0,626.46 552.0,625.35 554.0,624.58 556.0,623.91 558.0,623.32 560.0,622.82 562.0,622.39 564.0,622.05 566.0,621.78 568.0,621.60 570.0,621.51 572.0,621.51 574.0,621.59 576.0,621.76 578.0,622.02 580.0,622.35 582.0,622.77 584.0,623.27 586.0,623.85 588.0,624.51 590.0,625.27 592.0,626.27 594.0,627.40 596.0,628.19 598.0,628.86 600.0,629.45 602.0,629.96 604.0,630.39 606.0,630.74 608.0,631.01 610.0,631.19 612.0,631.28 614.0,631.29 616.0,631.21 618.0,631.05 620.0,630.80 622.0,630.47 624.0,630.05 626.0,629.56 628.0,628.99 630.0,628.33 632.0,627.57 634.0,626.60 636.0,625.44 638.0,624.65 640.0,623.97 642.0,623.38 644.0,622.86 646.0,622.43 648.0,622.08 650.0,621.81 652.0,621.62 654.0,621.52 656.0,621.51 658.0,621.58 660.0,621.74 662.0,621.99 664.0,622.32 666.0,622.73 668.0,623.22 670.0,623.78 672.0,624.44 674.0,625.19 676.0,626.13 678.0,627.32 680.0,628.11 682.0,628.80 684.0,629.39 686.0,629.91 688.0,630.35 690.0,630.71 692.0,630.98 694.0,631.17 696.0,631.28 698.0,631.30 700.0,631.23 702.0,631.07 704.0,630.83 706.0,630.50 708.0,630.10 710.0,629.61 712.0,629.05 714.0,628.40 716.0,627.65 718.0,626.72 720.0,625.53 722.0,624.72 724.0,624.03 726.0,623.43 728.0,622.91 730.0,622.47 732.0,622.11 734.0,621.83 736.0,621.63 738.0,621.52 740.0,621.50 742.0,621.57 744.0,621.72 746.0,621.96 748.0,622.28 750.0,622.68 752.0,623.16 754.0,623.72 756.0,624.37 758.0,625.11 760.0,626.02 762.0,627.23 764.0,628.04 766.0,628.73 768.0,629.34 770.0,629.86 772.0,630.31 774.0,630.68 776.0,630.96 778.0,631.16 780.0,631.27 782.0,631.30 784.0,631.24 786.0,631.09 788.0,630.86 790.0,630.54 792.0,630.14 794.0,629.66 796.0,629.11 798.0,628.47 800.0,627.73 802.0,626.84 804.0,625.62 806.0,624.80 808.0,624.10 810.0,623.49 812.0,622.96 814.0,622.51 816.0,622.14 818.0,621.85 820.0,621.65 822.0,621.53 824.0,621.50 826.0,621.56 828.0,621.70 830.0,621.93 832.0,622.24 834.0,622.64 836.0,623.11 838.0,623.66 840.0,624.30 842.0,625.03 844.0,625.91 846.0,627.13 848.0,627.97 850.0,628.67 852.0,629.28 854.0,629.81 856.0,630.27 858.0,630.64 860.0,630.94 862.0,631.14 864.0,631.26 866.0,631.30 868.0,631.25 870.0,631.11 872.0,630.88 874.0,630.57 876.0,630.18 878.0,629.71 880.0,629.17 882.0,628.54 884.0,627.81 886.0,626.94 888.0,625.71 890.0,624.87 892.0,624.16 894.0,623.55 896.0,623.01 898.0,622.55 900.0,622.17 902.0,621.88 904.0,621.67 906.0,621.54 908.0,621.50 910.0,621.55 912.0,621.68 914.0,621.90 916.0,622.21 918.0,622.59 920.0,623.06 922.0,623.61 924.0,624.23 926.0,624.95 928.0,625.81 930.0,627.04 932.0,627.89 934.0,628.60 936.0,629.22 938.0,629.77 940.0,630.23 942.0,630.61 944.0,630.91 946.0,631.13 948.0,631.26 950.0,631.30 952.0,631.26 954.0,631.13 956.0,630.91 958.0,630.61 960.0,630.23 962.0,629.77 964.0,629.22 966.0,628.60 968.0,627.89 970.0,627.04 972.0,625.81 974.0,624.95 976.0,624.23 978.0,623.61 980.0,623.06 982.0,622.59 984.0,622.21 986.0,621.90 988.0,621.68 990.0,621.55 992.0,621.50 994.0,621.54 996.0,621.67 998.0,621.88 1000.0,622.17 1002.0,622.55 1004.0,623.01 1006.0,623.55 1008.0,624.16 1010.0,624.87 1012.0,625.71 1014.0,626.94 1016.0,627.81 1018.0,628.54 1020.0,629.17 1022.0,629.71 1024.0,630.18 1026.0,630.57 1028.0,630.88 1030.0,631.11 1032.0,631.25 1034.0,631.30 1036.0,631.26 1038.0,631.14 1040.0,630.94 1041.0,630.80 1056.0,630.80 1056.0,646.65 1041.0,646.65 1040.0,646.80 1038.0,647.03 1036.0,647.16 1034.0,647.20 1032.0,647.14 1030.0,646.99 1028.0,646.74 1026.0,646.40 1024.0,645.97 1022.0,645.45 1020.0,644.85 1018.0,644.15 1016.0,643.36 1014.0,642.39 1012.0,641.04 1010.0,640.12 1008.0,639.34 1006.0,638.66 1004.0,638.06 1002.0,637.56 1000.0,637.14 998.0,636.82 996.0,636.58 994.0,636.44 992.0,636.40 990.0,636.45 988.0,636.60 986.0,636.84 984.0,637.18 982.0,637.61 980.0,638.12 978.0,638.72 976.0,639.41 974.0,640.20 972.0,641.15 970.0,642.50 968.0,643.44 966.0,644.23 964.0,644.91 962.0,645.51 960.0,646.02 958.0,646.44 956.0,646.77 954.0,647.01 952.0,647.15 950.0,647.20 948.0,647.15 946.0,647.01 944.0,646.77 942.0,646.44 940.0,646.02 938.0,645.51 936.0,644.91 934.0,644.23 932.0,643.44 930.0,642.50 928.0,641.15 926.0,640.20 924.0,639.41 922.0,638.72 920.0,638.12 918.0,637.61 916.0,637.18 914.0,636.84 912.0,636.60 910.0,636.45 908.0,636.40 906.0,636.44 904.0,636.58 902.0,636.82 900.0,637.14 898.0,637.56 896.0,638.06 894.0,638.66 892.0,639.34 890.0,640.12 888.0,641.04 886.0,642.39 884.0,643.36 882.0,644.15 880.0,644.85 878.0,645.45 876.0,645.97 874.0,646.40 872.0,646.74 870.0,646.99 868.0,647.14 866.0,647.20 864.0,647.16 862.0,647.03 860.0,646.80 858.0,646.48 856.0,646.06 854.0,645.56 852.0,644.98 850.0,644.30 848.0,643.52 846.0,642.61 844.0,641.26 842.0,640.29 840.0,639.48 838.0,638.78 836.0,638.18 834.0,637.65 832.0,637.22 830.0,636.87 828.0,636.62 826.0,636.46 824.0,636.40 822.0,636.43 820.0,636.56 818.0,636.79 816.0,637.11 814.0,637.51 812.0,638.01 810.0,638.59 808.0,639.26 806.0,640.03 804.0,640.94 802.0,642.28 800.0,643.27 798.0,644.08 796.0,644.78 794.0,645.40 792.0,645.92 790.0,646.36 788.0,646.71 786.0,646.97 784.0,647.13 782.0,647.20 780.0,647.17 778.0,647.04 776.0,646.82 774.0,646.51 772.0,646.11 770.0,645.62 768.0,645.04 766.0,644.37 764.0,643.61 762.0,642.71 760.0,641.38 758.0,640.37 756.0,639.56 754.0,638.85 752.0,638.23 750.0,637.70 748.0,637.26 746.0,636.90 744.0,636.64 742.0,636.48 740.0,636.40 738.0,636.43 736.0,636.55 734.0,636.76 732.0,637.07 730.0,637.47 728.0,637.96 726.0,638.53 724.0,639.19 722.0,639.95 720.0,640.84 718.0,642.16 716.0,643.18 714.0,644.00 712.0,644.72 710.0,645.34 708.0,645.87 706.0,646.32 704.0,646.68 702.0,646.95 700.0,647.12 698.0,647.20 696.0,647.18 694.0,647.06 692.0,646.85 690.0,646.55 688.0,646.15 686.0,645.67 684.0,645.10 682.0,644.44 680.0,643.69 678.0,642.81 676.0,641.51 674.0,640.46 672.0,639.64 670.0,638.92 668.0,638.29 666.0,637.75 664.0,637.30 662.0,636.94 660.0,636.66 658.0,636.49 656.0,636.41 654.0,636.42 652.0,636.53 650.0,636.74 648.0,637.03 646.0,637.42 644.0,637.90 642.0,638.47 640.0,639.12 638.0,639.87 636.0,640.74 634.0,642.02 632.0,643.09 630.0,643.93 628.0,644.65 626.0,645.28 624.0,645.82 622.0,646.28 620.0,646.65 618.0,646.92 616.0,647.11 614.0,647.19 612.0,647.18 610.0,647.08 608.0,646.88 606.0,646.58 604.0,646.20 602.0,645.72 600.0,645.16 598.0,644.51 596.0,643.77 594.0,642.90 592.0,641.65 590.0,640.56 588.0,639.71 586.0,638.98 584.0,638.35 582.0,637.80 580.0,637.34 578.0,636.97 576.0,636.69 574.0,636.50 572.0,636.41 570.0,636.41 568.0,636.52 566.0,636.71 564.0,637.00 562.0,637.38 560.0,637.85 558.0,638.41 556.0,639.05 554.0,639.79 552.0,640.65 550.0,641.86 548.0,643.00 546.0,643.85 544.0,644.58 542.0,645.22 540.0,645.77 538.0,646.24 536.0,646.62 534.0,646.90 532.0,647.09 530.0,647.19 528.0,647.19 526.0,647.09 524.0,646.90 522.0,646.62 520.0,646.24 518.0,645.77 516.0,645.22 514.0,644.58 512.0,643.85 510.0,643.00 508.0,641.86 506.0,640.65 504.0,639.79 502.0,639.05 500.0,638.41 498.0,637.85 496.0,637.38 494.0,637.00 492.0,636.71 490.0,636.52 488.0,636.41 486.0,636.41 484.0,636.50 482.0,636.69 480.0,636.97 478.0,637.34 476.0,637.80 474.0,638.35 472.0,638.98 470.0,639.71 468.0,640.56 466.0,641.65 464.0,642.90 462.0,643.77 460.0,644.51 458.0,645.16 456.0,645.72 454.0,646.20 452.0,646.58 450.0,646.88 448.0,647.08 446.0,647.18 444.0,647.19 442.0,647.11 440.0,646.92 438.0,646.65 436.0,646.28 434.0,645.82 432.0,645.28 430.0,644.65 428.0,643.93 426.0,643.09 424.0,642.02 422.0,640.74 420.0,639.87 418.0,639.12 416.0,638.47 414.0,637.90 412.0,637.42 410.0,637.03 408.0,636.74 406.0,636.53 404.0,636.42 402.0,636.41 400.0,636.49 398.0,636.66 396.0,636.94 394.0,637.30 392.0,637.75 390.0,638.29 388.0,638.92 386.0,639.64 384.0,640.46 382.0,641.51 380.0,642.81 378.0,643.69 376.0,644.44 374.0,645.10 372.0,645.67 370.0,646.15 368.0,646.55 366.0,646.85 364.0,647.06 362.0,647.18 360.0,647.20 358.0,647.12 356.0,646.95 354.0,646.68 352.0,646.32 350.0,645.87 348.0,645.34 346.0,644.72 344.0,644.00 342.0,643.18 340.0,642.16 338.0,640.84 336.0,639.95 334.0,639.19 332.0,638.53 330.0,637.96 328.0,637.47 326.0,637.07 324.0,636.76 322.0,636.55 320.0,636.43 318.0,636.40 316.0,636.48 314.0,636.64 312.0,636.90 310.0,637.26 308.0,637.70 306.0,638.23 304.0,638.85 302.0,639.56 300.0,640.37 298.0,641.38 296.0,641.38" fill="#fff"/>
<polyline points="298.0,626.02 300.0,625.11 302.0,624.37 304.0,623.72 306.0,623.16 308.0,622.68 310.0,622.28 312.0,621.96 314.0,621.72 316.0,621.57 318.0,621.50 320.0,621.52 322.0,621.63 324.0,621.83 326.0,622.11 328.0,622.47 330.0,622.91 332.0,623.43 334.0,624.03 336.0,624.72 338.0,625.53 340.0,626.72 342.0,627.65 344.0,628.40 346.0,629.05 348.0,629.61 350.0,630.10 352.0,630.50 354.0,630.83 356.0,631.07 358.0,631.23 360.0,631.30 362.0,631.28 364.0,631.17 366.0,630.98 368.0,630.71 370.0,630.35 372.0,629.91 374.0,629.39 376.0,628.80 378.0,628.11 380.0,627.32 382.0,626.13 384.0,625.19 386.0,624.44 388.0,623.78 390.0,623.22 392.0,622.73 394.0,622.32 396.0,621.99 398.0,621.74 400.0,621.58 402.0,621.51 404.0,621.52 406.0,621.62 408.0,621.81 410.0,622.08 412.0,622.43 414.0,622.86 416.0,623.38 418.0,623.97 420.0,624.65 422.0,625.44 424.0,626.60 426.0,627.57 428.0,628.33 430.0,628.99 432.0,629.56 434.0,630.05 436.0,630.47 438.0,630.80 440.0,631.05 442.0,631.21 444.0,631.29 446.0,631.28 448.0,631.19 450.0,631.01 452.0,630.74 454.0,630.39 456.0,629.96 458.0,629.45 460.0,628.86 462.0,628.19 464.0,627.40 466.0,626.27 468.0,625.27 470.0,624.51 472.0,623.85 474.0,623.27 476.0,622.77 478.0,622.35 480.0,622.02 482.0,621.76 484.0,621.59 486.0,621.51 488.0,621.51 490.0,621.60 492.0,621.78 494.0,622.05 496.0,622.39 498.0,622.82 500.0,623.32 502.0,623.91 504.0,624.58 506.0,625.35 508.0,626.46 510.0,627.49 512.0,628.26 514.0,628.92 516.0,629.50 518.0,630.01 520.0,630.43 522.0,630.77 524.0,631.03 526.0,631.20 528.0,631.29 530.0,631.29 532.0,631.20 534.0,631.03 536.0,630.77 538.0,630.43 540.0,630.01 542.0,629.50 544.0,628.92 546.0,628.26 548.0,627.49 550.0,626.46 552.0,625.35 554.0,624.58 556.0,623.91 558.0,623.32 560.0,622.82 562.0,622.39 564.0,622.05 566.0,621.78 568.0,621.60 570.0,621.51 572.0,621.51 574.0,621.59 576.0,621.76 578.0,622.02 580.0,622.35 582.0,622.77 584.0,623.27 586.0,623.85 588.0,624.51 590.0,625.27 592.0,626.27 594.0,627.40 596.0,628.19 598.0,628.86 600.0,629.45 602.0,629.96 604.0,630.39 606.0,630.74 608.0,631.01 610.0,631.19 612.0,631.28 614.0,631.29 616.0,631.21 618.0,631.05 620.0,630.80 622.0,630.47 624.0,630.05 626.0,629.56 628.0,628.99 630.0,628.33 632.0,627.57 634.0,626.60 636.0,625.44 638.0,624.65 640.0,623.97 642.0,623.38 644.0,622.86 646.0,622.43 648.0,622.08 650.0,621.81 652.0,621.62 654.0,621.52 656.0,621.51 658.0,621.58 660.0,621.74 662.0,621.99 664.0,622.32 666.0,622.73 668.0,623.22 670.0,623.78 672.0,624.44 674.0,625.19 676.0,626.13 678.0,627.32 680.0,628.11 682.0,628.80 684.0,629.39 686.0,629.91 688.0,630.35 690.0,630.71 692.0,630.98 694.0,631.17 696.0,631.28 698.0,631.30 700.0,631.23 702.0,631.07 704.0,630.83 706.0,630.50 708.0,630.10 710.0,629.61 712.0,629.05 714.0,628.40 716.0,627.65 718.0,626.72 720.0,625.53 722.0,624.72 724.0,624.03 726.0,623.43 728.0,622.91 730.0,622.47 732.0,622.11 734.0,621.83 736.0,621.63 738.0,621.52 740.0,621.50 742.0,621.57 744.0,621.72 746.0,621.96 748.0,622.28 750.0,622.68 752.0,623.16 754.0,623.72 756.0,624.37 758.0,625.11 760.0,626.02 762.0,627.23 764.0,628.04 766.0,628.73 768.0,629.34 770.0,629.86 772.0,630.31 774.0,630.68 776.0,630.96 778.0,631.16 780.0,631.27 782.0,631.30 784.0,631.24 786.0,631.09 788.0,630.86 790.0,630.54 792.0,630.14 794.0,629.66 796.0,629.11 798.0,628.47 800.0,627.73 802.0,626.84 804.0,625.62 806.0,624.80 808.0,624.10 810.0,623.49 812.0,622.96 814.0,622.51 816.0,622.14 818.0,621.85 820.0,621.65 822.0,621.53 824.0,621.50 826.0,621.56 828.0,621.70 830.0,621.93 832.0,622.24 834.0,622.64 836.0,623.11 838.0,623.66 840.0,624.30 842.0,625.03 844.0,625.91 846.0,627.13 848.0,627.97 850.0,628.67 852.0,629.28 854.0,629.81 856.0,630.27 858.0,630.64 860.0,630.94 862.0,631.14 864.0,631.26 866.0,631.30 868.0,631.25 870.0,631.11 872.0,630.88 874.0,630.57 876.0,630.18 878.0,629.71 880.0,629.17 882.0,628.54 884.0,627.81 886.0,626.94 888.0,625.71 890.0,624.87 892.0,624.16 894.0,623.55 896.0,623.01 898.0,622.55 900.0,622.17 902.0,621.88 904.0,621.67 906.0,621.54 908.0,621.50 910.0,621.55 912.0,621.68 914.0,621.90 916.0,622.21 918.0,622.59 920.0,623.06 922.0,623.61 924.0,624.23 926.0,624.95 928.0,625.81 930.0,627.04 932.0,627.89 934.0,628.60 936.0,629.22 938.0,629.77 940.0,630.23 942.0,630.61 944.0,630.91 946.0,631.13 948.0,631.26 950.0,631.30 952.0,631.26 954.0,631.13 956.0,630.91 958.0,630.61 960.0,630.23 962.0,629.77 964.0,629.22 966.0,628.60 968.0,627.89 970.0,627.04 972.0,625.81 974.0,624.95 976.0,624.23 978.0,623.61 980.0,623.06 982.0,622.59 984.0,622.21 986.0,621.90 988.0,621.68 990.0,621.55 992.0,621.50 994.0,621.54 996.0,621.67 998.0,621.88 1000.0,622.17 1002.0,622.55 1004.0,623.01 1006.0,623.55 1008.0,624.16 1010.0,624.87 1012.0,625.71 1014.0,626.94 1016.0,627.81 1018.0,628.54 1020.0,629.17 1022.0,629.71 1024.0,630.18 1026.0,630.57 1028.0,630.88 1030.0,631.11 1032.0,631.25 1034.0,631.30 1036.0,631.26 1038.0,631.14 1040.0,630.94 1041.0,630.80" fill="none" stroke="#999" stroke-width="1.1"/>
<polyline points="298.0,641.38 300.0,640.37 302.0,639.56 304.0,638.85 306.0,638.23 308.0,637.70 310.0,637.26 312.0,636.90 314.0,636.64 316.0,636.48 318.0,636.40 320.0,636.43 322.0,636.55 324.0,636.76 326.0,637.07 328.0,637.47 330.0,637.96 332.0,638.53 334.0,639.19 336.0,639.95 338.0,640.84 340.0,642.16 342.0,643.18 344.0,644.00 346.0,644.72 348.0,645.34 350.0,645.87 352.0,646.32 354.0,646.68 356.0,646.95 358.0,647.12 360.0,647.20 362.0,647.18 364.0,647.06 366.0,646.85 368.0,646.55 370.0,646.15 372.0,645.67 374.0,645.10 376.0,644.44 378.0,643.69 380.0,642.81 382.0,641.51 384.0,640.46 386.0,639.64 388.0,638.92 390.0,638.29 392.0,637.75 394.0,637.30 396.0,636.94 398.0,636.66 400.0,636.49 402.0,636.41 404.0,636.42 406.0,636.53 408.0,636.74 410.0,637.03 412.0,637.42 414.0,637.90 416.0,638.47 418.0,639.12 420.0,639.87 422.0,640.74 424.0,642.02 426.0,643.09 428.0,643.93 430.0,644.65 432.0,645.28 434.0,645.82 436.0,646.28 438.0,646.65 440.0,646.92 442.0,647.11 444.0,647.19 446.0,647.18 448.0,647.08 450.0,646.88 452.0,646.58 454.0,646.20 456.0,645.72 458.0,645.16 460.0,644.51 462.0,643.77 464.0,642.90 466.0,641.65 468.0,640.56 470.0,639.71 472.0,638.98 474.0,638.35 476.0,637.80 478.0,637.34 480.0,636.97 482.0,636.69 484.0,636.50 486.0,636.41 488.0,636.41 490.0,636.52 492.0,636.71 494.0,637.00 496.0,637.38 498.0,637.85 500.0,638.41 502.0,639.05 504.0,639.79 506.0,640.65 508.0,641.86 510.0,643.00 512.0,643.85 514.0,644.58 516.0,645.22 518.0,645.77 520.0,646.24 522.0,646.62 524.0,646.90 526.0,647.09 528.0,647.19 530.0,647.19 532.0,647.09 534.0,646.90 536.0,646.62 538.0,646.24 540.0,645.77 542.0,645.22 544.0,644.58 546.0,643.85 548.0,643.00 550.0,641.86 552.0,640.65 554.0,639.79 556.0,639.05 558.0,638.41 560.0,637.85 562.0,637.38 564.0,637.00 566.0,636.71 568.0,636.52 570.0,636.41 572.0,636.41 574.0,636.50 576.0,636.69 578.0,636.97 580.0,637.34 582.0,637.80 584.0,638.35 586.0,638.98 588.0,639.71 590.0,640.56 592.0,641.65 594.0,642.90 596.0,643.77 598.0,644.51 600.0,645.16 602.0,645.72 604.0,646.20 606.0,646.58 608.0,646.88 610.0,647.08 612.0,647.18 614.0,647.19 616.0,647.11 618.0,646.92 620.0,646.65 622.0,646.28 624.0,645.82 626.0,645.28 628.0,644.65 630.0,643.93 632.0,643.09 634.0,642.02 636.0,640.74 638.0,639.87 640.0,639.12 642.0,638.47 644.0,637.90 646.0,637.42 648.0,637.03 650.0,636.74 652.0,636.53 654.0,636.42 656.0,636.41 658.0,636.49 660.0,636.66 662.0,636.94 664.0,637.30 666.0,637.75 668.0,638.29 670.0,638.92 672.0,639.64 674.0,640.46 676.0,641.51 678.0,642.81 680.0,643.69 682.0,644.44 684.0,645.10 686.0,645.67 688.0,646.15 690.0,646.55 692.0,646.85 694.0,647.06 696.0,647.18 698.0,647.20 700.0,647.12 702.0,646.95 704.0,646.68 706.0,646.32 708.0,645.87 710.0,645.34 712.0,644.72 714.0,644.00 716.0,643.18 718.0,642.16 720.0,640.84 722.0,639.95 724.0,639.19 726.0,638.53 728.0,637.96 730.0,637.47 732.0,637.07 734.0,636.76 736.0,636.55 738.0,636.43 740.0,636.40 742.0,636.48 744.0,636.64 746.0,636.90 748.0,637.26 750.0,637.70 752.0,638.23 754.0,638.85 756.0,639.56 758.0,640.37 760.0,641.38 762.0,642.71 764.0,643.61 766.0,644.37 768.0,645.04 770.0,645.62 772.0,646.11 774.0,646.51 776.0,646.82 778.0,647.04 780.0,647.17 782.0,647.20 784.0,647.13 786.0,646.97 788.0,646.71 790.0,646.36 792.0,645.92 794.0,645.40 796.0,644.78 798.0,644.08 800.0,643.27 802.0,642.28 804.0,640.94 806.0,640.03 808.0,639.26 810.0,638.59 812.0,638.01 814.0,637.51 816.0,637.11 818.0,636.79 820.0,636.56 822.0,636.43 824.0,636.40 826.0,636.46 828.0,636.62 830.0,636.87 832.0,637.22 834.0,637.65 836.0,638.18 838.0,638.78 840.0,639.48 842.0,640.29 844.0,641.26 846.0,642.61 848.0,643.52 850.0,644.30 852.0,644.98 854.0,645.56 856.0,646.06 858.0,646.48 860.0,646.80 862.0,647.03 864.0,647.16 866.0,647.20 868.0,647.14 870.0,646.99 872.0,646.74 874.0,646.40 876.0,645.97 878.0,645.45 880.0,644.85 882.0,644.15 884.0,643.36 886.0,642.39 888.0,641.04 890.0,640.12 892.0,639.34 894.0,638.66 896.0,638.06 898.0,637.56 900.0,637.14 902.0,636.82 904.0,636.58 906.0,636.44 908.0,636.40 910.0,636.45 912.0,636.60 914.0,636.84 916.0,637.18 918.0,637.61 920.0,638.12 922.0,638.72 924.0,639.41 926.0,640.20 928.0,641.15 930.0,642.50 932.0,643.44 934.0,644.23 936.0,644.91 938.0,645.51 940.0,646.02 942.0,646.44 944.0,646.77 946.0,647.01 948.0,647.15 950.0,647.20 952.0,647.15 954.0,647.01 956.0,646.77 958.0,646.44 960.0,646.02 962.0,645.51 964.0,644.91 966.0,644.23 968.0,643.44 970.0,642.50 972.0,641.15 974.0,640.20 976.0,639.41 978.0,638.72 980.0,638.12 982.0,637.61 984.0,637.18 986.0,636.84 988.0,636.60 990.0,636.45 992.0,636.40 994.0,636.44 996.0,636.58 998.0,636.82 1000.0,637.14 1002.0,637.56 1004.0,638.06 1006.0,638.66 1008.0,639.34 1010.0,640.12 1012.0,641.04 1014.0,642.39 1016.0,643.36 1018.0,644.15 1020.0,644.85 1022.0,645.45 1024.0,645.97 1026.0,646.40 1028.0,646.74 1030.0,646.99 1032.0,647.14 1034.0,647.20 1036.0,647.16 1038.0,647.03 1040.0,646.80 1041.0,646.65" fill="none" stroke="#999" stroke-width="1.1"/>
<rect x="842" y="600" width="3" height="70" fill="#ff3b3b"/>
<rect x="1014" y="600" width="3" height="70" fill="#ff3b3b"/>
<rect x="1041" y="600" width="1" height="30.8" fill="#a6a6a6"/>
<rect x="1041" y="646.6" width="1" height="30" fill="#a6a6a6"/>
<rect x="1042" y="627" width="13" height="6" fill="#fff"/>
<rect x="1052" y="600" width="1" height="27" fill="#a6a6a6"/>
<rect x="1052" y="642" width="1" height="28" fill="#a6a6a6"/>
<rect x="1054" y="600" width="1" height="27" fill="#a0a0a0"/>
<rect x="1054" y="642" width="1" height="28" fill="#a0a0a0"/>
<rect x="1055" y="600" width="1" height="70" fill="#a0a0a0"/>
<rect x="299" y="633" width="1" height="1" fill="#aaa"/>
<rect x="320" y="633" width="1" height="1" fill="#333"/>
<rect x="800" y="633" width="1" height="1" fill="#333"/>
<rect x="845" y="633" width="1" height="1" fill="#333"/>
<rect x="1013" y="633" width="1" height="1" fill="#333"/>
<rect x="846" y="633" width="167" height="1" fill="#eef3e6"/>
<path d="M335 633.500H356" stroke="#8a8fb0" stroke-width="1" stroke-dasharray="2 1.5"/>
</svg>

<!-- red highlight -->
<div class="abs" style="left:842px;top:401px;width:175px;height:531px;border:3px solid #ff3b3b;box-sizing:border-box"></div>
</body></html>
